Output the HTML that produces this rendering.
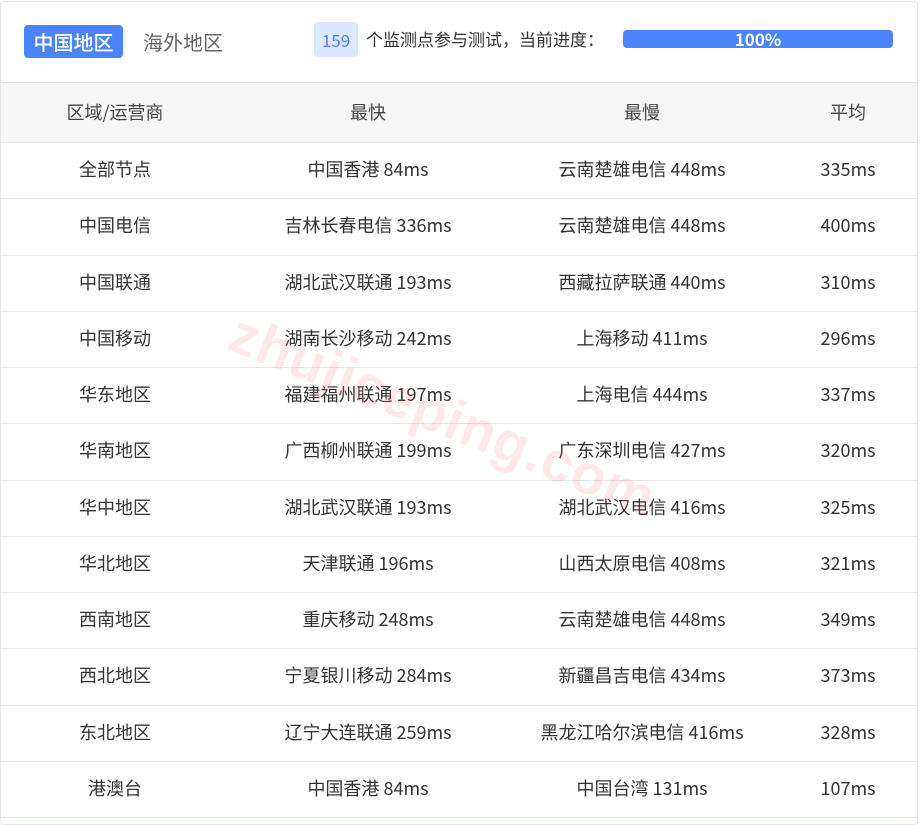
<!DOCTYPE html>
<html><head><meta charset="utf-8"><style>
*{margin:0;padding:0;box-sizing:border-box}
body{width:920px;height:825px;background:#fff;font-family:"Noto Sans CJK SC","Liberation Sans",sans-serif;color:#333;position:relative;overflow:hidden}
.card{position:absolute;left:0;top:1px;width:918px;height:824px;border:1px solid #e3e7ec;border-radius:4px}
.tab1{position:absolute;left:24px;top:25px;width:99px;height:33px;background:#4a84f7;border-radius:4px;color:#fff;font-size:20px;line-height:33px;text-align:center;font-weight:500}
.tab2{position:absolute;left:143px;top:25px;height:33px;line-height:33px;font-size:20px;color:#666}
.badge{position:absolute;left:314px;top:22px;width:44px;height:35px;background:#dde7fd;border-radius:4px;color:#4a84f7;font-size:17px;line-height:35px;text-align:center}
.lbl{position:absolute;left:366px;top:21px;line-height:35px;font-size:17px;color:#333}
.bar{position:absolute;left:623px;top:30px;width:270px;height:18px;background:#4a84f7;border-radius:4px;color:#fff;font-size:17px;font-weight:bold;text-align:center;line-height:18px}
.row{position:absolute;left:1px;width:916px;border-top:1px solid #e3e7ec;font-size:18px}
.row div{position:absolute;top:0;height:100%;display:flex;align-items:center;justify-content:center;white-space:nowrap;line-height:1;padding-bottom:4px}
.c1{left:14px;width:200px}.c2{left:217px;width:300px}.c3{left:491px;width:300px}.c4{left:797px;width:100px}
.hd{background:#f6f6f6;font-size:18px;color:#444}
.hd div{padding-bottom:2px}
.wm{position:absolute;left:245px;top:300px;font-size:56px;font-weight:bold;color:rgba(255,110,110,0.16);transform:rotate(22deg);transform-origin:0 0;letter-spacing:1px;font-family:"Liberation Sans",sans-serif}
</style></head><body>
<div class="card"></div>
<div class="tab1">中国地区</div><div class="tab2">海外地区</div>
<div class="badge">159</div><div class="lbl">个监测点参与测试，当前进度：</div>
<div class="bar">100%</div>
<div class="row hd" style="top:82px;height:61px"><div class="c1">区域/运营商</div><div class="c2">最快</div><div class="c3">最慢</div><div class="c4">平均</div></div>
<div class="row" style="top:142px;height:57px"><div class="c1">全部节点</div><div class="c2">中国香港 84ms</div><div class="c3">云南楚雄电信 448ms</div><div class="c4">335ms</div></div>
<div class="row" style="top:198px;height:57px"><div class="c1">中国电信</div><div class="c2">吉林长春电信 336ms</div><div class="c3">云南楚雄电信 448ms</div><div class="c4">400ms</div></div>
<div class="row" style="top:255px;height:57px"><div class="c1">中国联通</div><div class="c2">湖北武汉联通 193ms</div><div class="c3">西藏拉萨联通 440ms</div><div class="c4">310ms</div></div>
<div class="row" style="top:311px;height:57px"><div class="c1">中国移动</div><div class="c2">湖南长沙移动 242ms</div><div class="c3">上海移动 411ms</div><div class="c4">296ms</div></div>
<div class="row" style="top:367px;height:57px"><div class="c1">华东地区</div><div class="c2">福建福州联通 197ms</div><div class="c3">上海电信 444ms</div><div class="c4">337ms</div></div>
<div class="row" style="top:423px;height:57px"><div class="c1">华南地区</div><div class="c2">广西柳州联通 199ms</div><div class="c3">广东深圳电信 427ms</div><div class="c4">320ms</div></div>
<div class="row" style="top:480px;height:57px"><div class="c1">华中地区</div><div class="c2">湖北武汉联通 193ms</div><div class="c3">湖北武汉电信 416ms</div><div class="c4">325ms</div></div>
<div class="row" style="top:536px;height:57px"><div class="c1">华北地区</div><div class="c2">天津联通 196ms</div><div class="c3">山西太原电信 408ms</div><div class="c4">321ms</div></div>
<div class="row" style="top:592px;height:57px"><div class="c1">西南地区</div><div class="c2">重庆移动 248ms</div><div class="c3">云南楚雄电信 448ms</div><div class="c4">349ms</div></div>
<div class="row" style="top:648px;height:57px"><div class="c1">西北地区</div><div class="c2">宁夏银川移动 284ms</div><div class="c3">新疆昌吉电信 434ms</div><div class="c4">373ms</div></div>
<div class="row" style="top:705px;height:57px"><div class="c1">东北地区</div><div class="c2">辽宁大连联通 259ms</div><div class="c3">黑龙江哈尔滨电信 416ms</div><div class="c4">328ms</div></div>
<div class="row" style="top:761px;height:57px;border-bottom:1px solid #e3e7ec"><div class="c1">港澳台</div><div class="c2">中国香港 84ms</div><div class="c3">中国台湾 131ms</div><div class="c4">107ms</div></div>
<div class="wm">zhujiceping.com</div>
</body></html>
